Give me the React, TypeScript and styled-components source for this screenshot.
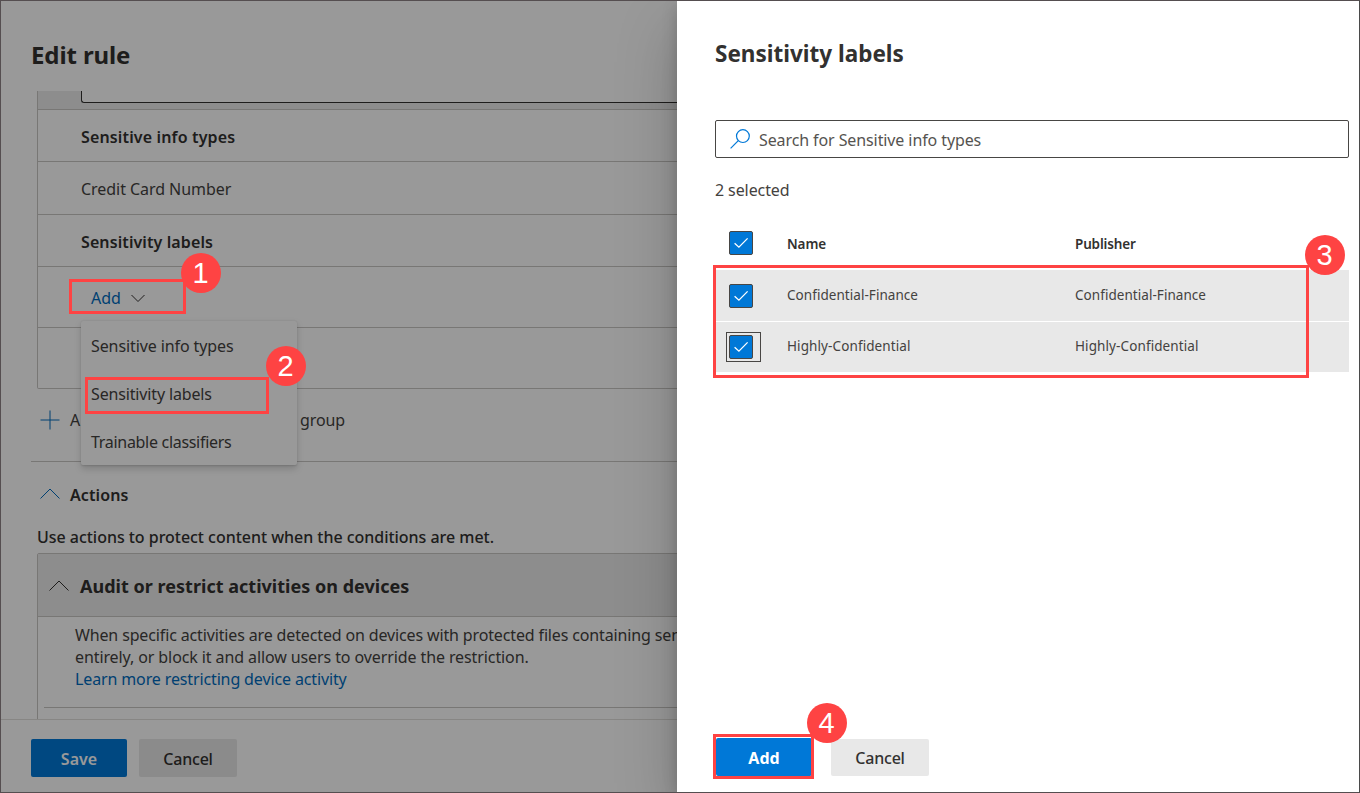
import React from "react";
import styled, { createGlobalStyle } from "styled-components";

const Global = createGlobalStyle`
  * { box-sizing: border-box; }
  body { margin: 0; overflow: hidden; }
`;

const color = {
  text: "#323130",
  soft: "#444240",
  line: "#c8c6c4",
  shade: "#ececec",
  neutral: "#e8e8e8",
  primary: "#0078d7",
  link: "#006cbe",
  mark: "#fe4343",
};

const Window = styled.div`
  position: relative;
  width: 1360px;
  height: 793px;
  border: 1px solid #554e50;
  border-right-color: #4a4a4a;
  background: #fff;
  overflow: hidden;
  font-family: "Noto Sans", "Open Sans", sans-serif;
  font-size: 16px;
  line-height: 22px;
  color: ${color.text};
`;

const Text = styled.span<{ $size?: number; $weight?: number; $space?: number; $drop?: number; $color?: string }>`
  display: inline-block;
  white-space: nowrap;
  padding-top: ${(p) => p.$drop ?? 0}px;
  font-size: ${(p) => p.$size ?? 16}px;
  font-weight: ${(p) => p.$weight ?? 400};
  letter-spacing: ${(p) => p.$space ?? 0}px;
  color: ${(p) => p.$color ?? (p.$weight ? "inherit" : color.soft)};
`;

const Page = styled.div`
  display: flex;
  flex-direction: column;
  height: 791px;
`;

const PageHeader = styled.header`
  display: flex;
  align-items: center;
  height: 90px;
  padding: 18px 0 0 30px;
`;

const PageBody = styled.main`
  flex: 1;
  overflow: hidden;
  padding: 0 30px;
`;

const PageFooter = styled.footer`
  display: flex;
  gap: 12px;
  height: 73px;
  padding: 19px 30px 0;
  border-top: 1px solid #e1dfdd;
`;

const Button = styled.button<{ $primary?: boolean; $width: number; $height?: number }>`
  display: flex;
  align-items: center;
  justify-content: center;
  width: ${(p) => p.$width}px;
  height: ${(p) => p.$height ?? 38}px;
  padding: 0;
  border: 0;
  border-radius: 2px;
  font: inherit;
  background: ${(p) => (p.$primary ? color.primary : color.neutral)};
  color: ${(p) => (p.$primary ? "#fff" : color.text)};
`;

const Group = styled.section`
  margin-left: 6px;
  border: 1px solid ${color.line};
  border-top: 0;
  border-radius: 0 0 2px 2px;
`;

const GroupTop = styled.div`
  height: 18px;
  padding-left: 43px;
  background: ${color.shade};
`;

const FieldEdge = styled.div`
  height: 12px;
  border: 1px solid ${color.text};
  border-top: 0;
  border-right: 0;
  border-radius: 0 0 0 3px;
  background: #fff;
`;

const GroupRow = styled.div<{ $height: number; $indent?: number }>`
  display: flex;
  align-items: center;
  gap: 10px;
  height: ${(p) => p.$height}px;
  padding: 2px 0 0 ${(p) => p.$indent ?? 43}px;
  border-top: 1px solid ${color.line};
`;

const AddGroup = styled.div`
  display: flex;
  align-items: center;
  height: 73px;
  padding: 0 0 11px 9px;
  border-bottom: 1px solid ${color.line};
`;

const AddGroupLead = styled.span`
  width: 230px;
  margin-left: 10px;
`;

const SectionHeader = styled.div`
  display: flex;
  align-items: center;
  gap: 10px;
  height: 64px;
  padding-left: 9px;
`;

const Hint = styled.div`
  height: 27px;
  padding-left: 6px;
`;

const Card = styled.section`
  height: 180px;
  margin-left: 6px;
  border: 1px solid ${color.line};
  border-radius: 2px 2px 0 0;
`;

const CardHeader = styled.div`
  display: flex;
  align-items: center;
  gap: 11px;
  height: 63px;
  padding: 1px 0 0 11px;
  border-bottom: 1px solid ${color.line};
  background: ${color.shade};
`;

const CardBody = styled.div`
  display: flex;
  flex-direction: column;
  height: 91px;
  margin-left: 6px;
  padding: 7px 0 0 31px;
  border-bottom: 1px solid ${color.line};
`;

const Menu = styled.div`
  position: absolute;
  left: 80px;
  top: 320px;
  display: flex;
  flex-direction: column;
  width: 216px;
  height: 144px;
  padding: 1px 0 0 10px;
  border-radius: 2px;
  background: #fff;
  box-shadow: 0 3.2px 7.2px rgba(0, 0, 0, 0.16), 0 0.6px 1.8px rgba(0, 0, 0, 0.12);
`;

const MenuItem = styled.div`
  display: flex;
  align-items: center;
  flex: none;
  height: 48px;
`;

const Dim = styled.div`
  position: absolute;
  inset: 0;
  background: rgba(0, 0, 0, 0.4);
`;

const Panel = styled.aside`
  position: absolute;
  top: 0;
  right: 0;
  display: flex;
  flex-direction: column;
  width: 682px;
  height: 791px;
  padding: 0 10px 16px 38px;
  background: #fff;
  box-shadow: 0 25.6px 57.6px rgba(0, 0, 0, 0.22), 0 4.8px 14.4px rgba(0, 0, 0, 0.18);
`;

const PanelHeader = styled.header`
  display: flex;
  align-items: center;
  height: 119px;
  padding-bottom: 13px;
`;

const Search = styled.div`
  display: flex;
  align-items: center;
  gap: 9px;
  height: 38px;
  padding-left: 14px;
  border: 1px solid #484644;
  border-radius: 2px;
`;

const Count = styled.div`
  height: 58px;
  padding-top: 21px;
`;

const ListRow = styled.div<{ $height: number; $selected?: boolean }>`
  display: grid;
  grid-template-columns: 71px 288px 1fr;
  align-items: center;
  height: ${(p) => p.$height}px;
  margin-left: 1px;
  margin-bottom: ${(p) => (p.$selected ? 1 : 0)}px;
  background: ${(p) => (p.$selected ? color.neutral : "#fff")};
`;

const LabelCell = styled.div`
  padding-bottom: 3px;
`;

const CheckCell = styled.div<{ $focused?: boolean }>`
  display: flex;
  align-items: center;
  width: 35px;
  height: 30px;
  margin-left: 10px;
  padding-left: 2px;
  border: 1px solid ${(p) => (p.$focused ? "#484644" : "transparent")};
`;

const CheckSquare = styled.div`
  display: flex;
  align-items: center;
  justify-content: center;
  width: 24px;
  height: 24px;
  border: 1px solid #484644;
  border-radius: 2px;
  background: ${color.primary};
`;

const PanelFooter = styled.footer`
  display: flex;
  align-items: flex-end;
  gap: 19px;
  margin-top: auto;
  padding-left: 1px;
`;

const Outline = styled.div<{ $x: number; $y: number; $w: number; $h: number }>`
  position: absolute;
  left: ${(p) => p.$x - 1}px;
  top: ${(p) => p.$y - 1}px;
  width: ${(p) => p.$w}px;
  height: ${(p) => p.$h}px;
  border: 3px solid ${color.mark};
`;

const Badge = styled.div<{ $x: number; $y: number }>`
  position: absolute;
  left: ${(p) => p.$x - 21}px;
  top: ${(p) => p.$y - 21}px;
  display: flex;
  align-items: center;
  justify-content: center;
  width: 40px;
  height: 40px;
  border-radius: 50%;
  background: ${color.mark};
  color: #fff;
  font: 29px/1 "Liberation Sans", Arial, sans-serif;
  padding-top: 1px;
  padding-right: 1px;
`;

const Chevron = ({ up, w, stroke }: { up?: boolean; w: number; stroke: string }) => (
  <svg width={w} height={w / 2 + 2} viewBox={`0 0 ${w} ${w / 2 + 2}`} fill="none" stroke={stroke}>
    <path d={up ? `M.5 ${w / 2 + 0.5}L${w / 2} 1L${w - 0.5} ${w / 2 + 0.5}` : `M.5 1L${w / 2} ${w / 2 + 0.5}L${w - 0.5} 1`} />
  </svg>
);

const Check = ({ focused }: { focused?: boolean }) => (
  <CheckCell $focused={focused}>
    <CheckSquare>
      <svg width="16" height="14" viewBox="0 0 16 14" fill="none" stroke="#fff" strokeWidth="1.3">
        <path d="M1.6 7.2L5.9 11.2L14.6 2.4" />
      </svg>
    </CheckSquare>
  </CheckCell>
);

const rows = [
  { label: "Confidential-Finance", space: 0.05 },
  { label: "Highly-Confidential", space: 0.1 },
];

export default function App() {
  return (
    <>
      <Global />
      <Window>
        <Page>
          <PageHeader>
            <Text $size={24} $weight={700} $space={-0.1}>Edit rule</Text>
          </PageHeader>
          <PageBody>
            <Group>
              <GroupTop><FieldEdge /></GroupTop>
              <GroupRow $height={52}><Text $weight={600} $space={0.15}>Sensitive info types</Text></GroupRow>
              <GroupRow $height={53}><Text $space={-0.05}>Credit Card Number</Text></GroupRow>
              <GroupRow $height={52}><Text $weight={600} $space={0.1}>Sensitivity labels</Text></GroupRow>
              <GroupRow $height={61} $indent={53}>
                <Text $color={color.link}>Add</Text>
                <Chevron w={14} stroke={color.text} />
              </GroupRow>
              <GroupRow $height={61} />
            </Group>
            <AddGroup>
              <svg width="20" height="20" viewBox="0 0 20 20" stroke={color.link}>
                <path d="M10 .5V19.5M.5 10H19.5" />
              </svg>
              <AddGroupLead><Text>A</Text></AddGroupLead>
              <Text $space={-0.1}>group</Text>
            </AddGroup>
            <SectionHeader>
              <Chevron up w={20} stroke={color.link} />
              <Text $weight={600} $space={0.1} $drop={2}>Actions</Text>
            </SectionHeader>
            <Hint><Text $weight={500} $space={-0.03}>Use actions to protect content when the conditions are met.</Text></Hint>
            <Card>
              <CardHeader>
                <Chevron up w={20} stroke={color.text} />
                <Text $size={18} $weight={700} $space={0.02}>Audit or restrict activities on devices</Text>
              </CardHeader>
              <CardBody>
                <Text $space={-0.14}>When specific activities are detected on devices with protected files containing sensitive</Text>
                <Text $space={-0.1}>entirely, or block it and allow users to override the restriction.</Text>
                <Text $space={-0.13} $color={color.link}>Learn more restricting device activity</Text>
              </CardBody>
            </Card>
          </PageBody>
          <PageFooter>
            <Button $primary $width={96}><Text $weight={600} $drop={2}>Save</Text></Button>
            <Button $width={98}><Text $weight={500} $drop={2} $space={-0.2}>Cancel</Text></Button>
          </PageFooter>
        </Page>
        <Menu>
          <MenuItem><Text $space={-0.1}>Sensitive info types</Text></MenuItem>
          <MenuItem><Text $space={-0.15}>Sensitivity labels</Text></MenuItem>
          <MenuItem><Text $space={-0.3}>Trainable classifiers</Text></MenuItem>
        </Menu>
        <Dim />
        <Panel>
          <PanelHeader>
            <Text $size={22.5} $weight={700}>Sensitivity labels</Text>
          </PanelHeader>
          <Search>
            <svg width="20" height="20" viewBox="0 0 20 20" fill="none" stroke={color.primary} strokeWidth="1.2">
              <circle cx="12.9" cy="7.1" r="6.4" />
              <path d="M8.3 11.7L.6 19.4" />
            </svg>
            <Text $color="#555350" $drop={2} $space={-0.1}>Search for Sensitive info types</Text>
          </Search>
          <Count><Text $space={-0.1}>2 selected</Text></Count>
          <ListRow $height={54}>
            <Check />
            <Text $size={13.5} $weight={600} $space={-0.1} $drop={2}>Name</Text>
            <Text $size={13.5} $weight={600} $space={-0.15} $drop={2}>Publisher</Text>
          </ListRow>
          {rows.map(({ label, space }, i) => (
            <ListRow key={label} $height={i === 0 ? 51 : 50} $selected>
              <Check focused={i === 1} />
              <LabelCell><Text $size={13.5} $space={space}>{label}</Text></LabelCell>
              <LabelCell><Text $size={13.5} $space={space}>{label}</Text></LabelCell>
            </ListRow>
          ))}
          <PanelFooter>
            <Button $primary $width={96}><Text $weight={700} $drop={1}>Add</Text></Button>
            <Button $width={98} $height={37}><Text $weight={500} $space={-0.2}>Cancel</Text></Button>
          </PanelFooter>
        </Panel>
        <Outline $x={69} $y={279} $w={117} $h={35} />
        <Outline $x={85} $y={377} $w={184} $h={37} />
        <Outline $x={713} $y={265} $w={596} $h={113} />
        <Outline $x={713} $y={734} $w={101} $h={45} />
        <Badge $x={201} $y={273}>1</Badge>
        <Badge $x={286} $y={366}>2</Badge>
        <Badge $x={1325} $y={255}>3</Badge>
        <Badge $x={827} $y={723}>4</Badge>
      </Window>
    </>
  );
}
